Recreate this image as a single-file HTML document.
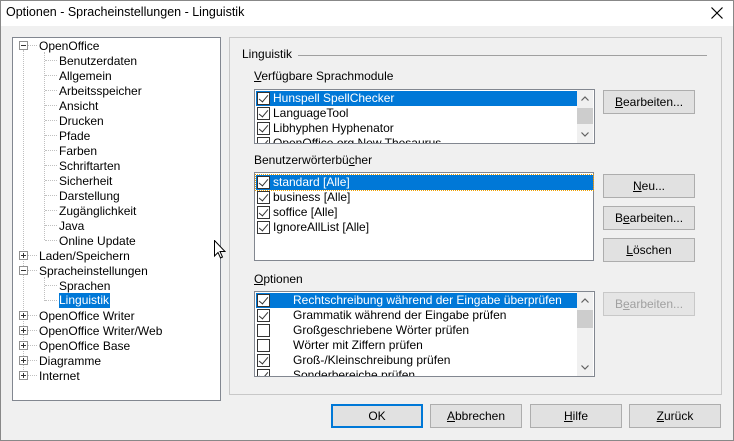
<!DOCTYPE html>
<html><head><meta charset="utf-8"><style>
*{margin:0;padding:0;box-sizing:border-box}
body{width:734px;height:441px;background:#f0f0f0;font-family:"Liberation Sans",sans-serif;font-size:12px;color:#000;position:relative;overflow:hidden}
.a{position:absolute;white-space:nowrap}
.tb{position:absolute;left:0;top:0;width:734px;height:26px;background:#fff}
.frame{position:absolute;left:0;top:0;width:734px;height:441px;border:1px solid #888}
.box{position:absolute;background:#fff;border:1px solid #828790}
.grp{position:absolute;border:1px solid #c8c8c8}
.btn{position:absolute;height:24px;background:#e1e1e1;border:1px solid #adadad;text-align:center;line-height:22px;font-size:12px}
.t{position:absolute;line-height:15px;height:15px;white-space:nowrap}
.sel{background:#0078d7;color:#fff}
.cb{position:absolute;width:13px;height:13px;border:1px solid #333;background:#fff}
.cb.c::after{content:"";position:absolute;left:3px;top:0px;width:4px;height:8px;border:solid #333;border-width:0 1.5px 1.5px 0;transform:rotate(40deg)}
.exp{position:absolute;width:9px;height:9px;border:1px solid #919191;background:#fff}
.exp::before{content:"";position:absolute;left:1px;top:3px;width:5px;height:1px;background:#333}
.exp.p::after{content:"";position:absolute;left:3px;top:1px;width:1px;height:5px;background:#333}
.hl{position:absolute;height:1px;border-top:1px dotted #c0c0c0}
.vl{position:absolute;width:1px;border-left:1px dotted #c0c0c0}
.sb{position:absolute;width:16px;background:#f0f0f0}
.th{position:absolute;left:0;width:16px;background:#cdcdcd}
.tree .t{margin-top:1px}
u{text-decoration:underline}
</style></head><body>
<div class="tb"></div>
<div class="a" style="left:6px;top:5px;font-size:12.5px">Optionen - Spracheinstellungen - Linguistik</div>
<svg class="a" style="left:711px;top:7px" width="12" height="12" viewBox="0 0 12 12"><path d="M0.5 0.5L11.5 11.5M11.5 0.5L0.5 11.5" stroke="#000" stroke-width="1.2"/></svg>
<div class="frame"></div>

<!-- tree -->
<div class="box" style="left:12px;top:37px;width:209px;height:364px;border-color:#828790"></div>
<div class="tree">
<div class="vl" style="left:23px;top:50px;height:326px"></div>
<div class="vl" style="left:44px;top:52px;height:188px"></div>
<div class="vl" style="left:44px;top:277px;height:24px"></div>
<div class="exp" style="left:19px;top:41px"></div>
<div class="hl" style="left:28px;top:45px;width:9px"></div>
<div class="t" style="left:39px;top:38px">OpenOffice</div>
<div class="hl" style="left:45px;top:60px;width:12px"></div><div class="t" style="left:59px;top:53px">Benutzerdaten</div>
<div class="hl" style="left:45px;top:75px;width:12px"></div><div class="t" style="left:59px;top:68px">Allgemein</div>
<div class="hl" style="left:45px;top:90px;width:12px"></div><div class="t" style="left:59px;top:83px">Arbeitsspeicher</div>
<div class="hl" style="left:45px;top:105px;width:12px"></div><div class="t" style="left:59px;top:98px">Ansicht</div>
<div class="hl" style="left:45px;top:120px;width:12px"></div><div class="t" style="left:59px;top:113px">Drucken</div>
<div class="hl" style="left:45px;top:135px;width:12px"></div><div class="t" style="left:59px;top:128px">Pfade</div>
<div class="hl" style="left:45px;top:150px;width:12px"></div><div class="t" style="left:59px;top:143px">Farben</div>
<div class="hl" style="left:45px;top:165px;width:12px"></div><div class="t" style="left:59px;top:158px">Schriftarten</div>
<div class="hl" style="left:45px;top:180px;width:12px"></div><div class="t" style="left:59px;top:173px">Sicherheit</div>
<div class="hl" style="left:45px;top:195px;width:12px"></div><div class="t" style="left:59px;top:188px">Darstellung</div>
<div class="hl" style="left:45px;top:210px;width:12px"></div><div class="t" style="left:59px;top:203px">Zugänglichkeit</div>
<div class="hl" style="left:45px;top:225px;width:12px"></div><div class="t" style="left:59px;top:218px">Java</div>
<div class="hl" style="left:45px;top:240px;width:12px"></div><div class="t" style="left:59px;top:233px">Online Update</div>
<div class="exp p" style="left:19px;top:251px"></div><div class="hl" style="left:28px;top:255px;width:9px"></div><div class="t" style="left:39px;top:248px">Laden/Speichern</div>
<div class="exp" style="left:19px;top:266px"></div><div class="hl" style="left:28px;top:270px;width:9px"></div><div class="t" style="left:39px;top:263px">Spracheinstellungen</div>
<div class="hl" style="left:45px;top:285px;width:12px"></div><div class="t" style="left:59px;top:278px">Sprachen</div>
<div class="hl" style="left:45px;top:300px;width:12px"></div><div class="t sel" style="left:59px;top:292px;padding-right:1px">Linguistik</div>
<div class="exp p" style="left:19px;top:311px"></div><div class="hl" style="left:28px;top:315px;width:9px"></div><div class="t" style="left:39px;top:308px">OpenOffice Writer</div>
<div class="exp p" style="left:19px;top:326px"></div><div class="hl" style="left:28px;top:330px;width:9px"></div><div class="t" style="left:39px;top:323px">OpenOffice Writer/Web</div>
<div class="exp p" style="left:19px;top:341px"></div><div class="hl" style="left:28px;top:345px;width:9px"></div><div class="t" style="left:39px;top:338px">OpenOffice Base</div>
<div class="exp p" style="left:19px;top:356px"></div><div class="hl" style="left:28px;top:360px;width:9px"></div><div class="t" style="left:39px;top:353px">Diagramme</div>
<div class="exp p" style="left:19px;top:371px"></div><div class="hl" style="left:28px;top:375px;width:9px"></div><div class="t" style="left:39px;top:368px">Internet</div>
</div>

<!-- right group -->
<div class="grp" style="left:229px;top:37px;width:493px;height:358px"></div>
<div class="a" style="left:242px;top:47px">Linguistik</div>
<div style="position:absolute;left:298px;top:55px;width:409px;height:1px;background:#a0a0a0"></div>

<div class="a" style="left:254px;top:69px"><u>V</u>erfügbare Sprachmodule</div>
<div class="box" style="left:254px;top:89px;width:341px;height:55px;overflow:hidden">
 <div class="t sel" style="left:1px;top:1px;width:321px"></div>
 <div class="cb c" style="left:2px;top:2px"></div><div class="t" style="left:18px;top:1px;color:#fff">Hunspell SpellChecker</div>
 <div class="cb c" style="left:2px;top:17px"></div><div class="t" style="left:18px;top:16px">LanguageTool</div>
 <div class="cb c" style="left:2px;top:32px"></div><div class="t" style="left:18px;top:31px">Libhyphen Hyphenator</div>
 <div class="cb c" style="left:2px;top:47px"></div><div class="t" style="left:18px;top:46px">OpenOffice.org New Thesaurus</div>
 <div class="sb" style="left:322px;top:0;height:53px"><svg class="a" style="left:4px;top:6px" width="8" height="5"><path d="M0.5 4.5L4 1L7.5 4.5" fill="none" stroke="#606060" stroke-width="1.2"/></svg><div class="th" style="top:18px;height:16px"></div><svg class="a" style="left:4px;top:42px" width="8" height="5"><path d="M0.5 0.5L4 4L7.5 0.5" fill="none" stroke="#606060" stroke-width="1.2"/></svg></div>
</div>
<div class="btn" style="left:603px;top:90px;width:92px"><u>B</u>earbeiten...</div>

<div class="a" style="left:254px;top:153px">Benutzerwörterbü<u>c</u>her</div>
<div class="box" style="left:254px;top:172px;width:340px;height:89px">
 <div class="t sel" style="left:1px;top:2px;width:337px;outline:1px dotted #f0a000"></div>
 <div class="cb c" style="left:2px;top:3px"></div><div class="t" style="left:18px;top:2px;color:#fff">standard [Alle]</div>
 <div class="cb c" style="left:2px;top:18px"></div><div class="t" style="left:18px;top:17px">business [Alle]</div>
 <div class="cb c" style="left:2px;top:33px"></div><div class="t" style="left:18px;top:32px">soffice [Alle]</div>
 <div class="cb c" style="left:2px;top:48px"></div><div class="t" style="left:18px;top:47px">IgnoreAllList [Alle]</div>
</div>
<div class="btn" style="left:603px;top:174px;width:92px"><u>N</u>eu...</div>
<div class="btn" style="left:603px;top:206px;width:92px">B<u>e</u>arbeiten...</div>
<div class="btn" style="left:603px;top:238px;width:92px"><u>L</u>öschen</div>

<div class="a" style="left:254px;top:272px"><u>O</u>ptionen</div>
<div class="box" style="left:254px;top:291px;width:341px;height:86px;overflow:hidden">
 <div class="t sel" style="left:1px;top:1px;width:321px"></div>
 <div class="cb c" style="left:2px;top:2px"></div><div class="t" style="left:38px;top:1px;color:#fff">Rechtschreibung während der Eingabe überprüfen</div>
 <div class="cb c" style="left:2px;top:17px"></div><div class="t" style="left:38px;top:16px">Grammatik während der Eingabe prüfen</div>
 <div class="cb" style="left:2px;top:32px"></div><div class="t" style="left:38px;top:31px">Großgeschriebene Wörter prüfen</div>
 <div class="cb" style="left:2px;top:47px"></div><div class="t" style="left:38px;top:46px">Wörter mit Ziffern prüfen</div>
 <div class="cb c" style="left:2px;top:62px"></div><div class="t" style="left:38px;top:61px">Groß-/Kleinschreibung prüfen</div>
 <div class="cb c" style="left:2px;top:77px"></div><div class="t" style="left:38px;top:76px">Sonderbereiche prüfen</div>
 <div class="sb" style="left:322px;top:0;height:84px"><svg class="a" style="left:4px;top:6px" width="8" height="5"><path d="M0.5 4.5L4 1L7.5 4.5" fill="none" stroke="#606060" stroke-width="1.2"/></svg><div class="th" style="top:18px;height:18px"></div><svg class="a" style="left:4px;top:73px" width="8" height="5"><path d="M0.5 0.5L4 4L7.5 0.5" fill="none" stroke="#606060" stroke-width="1.2"/></svg></div>
</div>
<div class="btn" style="left:603px;top:292px;width:92px;color:#a0a0a0;background:#e5e5e5;border-color:#c8c8c8">B<u>e</u>arbeiten...</div>
<div class="btn" style="left:331px;top:404px;width:92px;border:2px solid #0078d7;line-height:20px">OK</div>
<div class="btn" style="left:430px;top:404px;width:92px"><u>A</u>bbrechen</div>
<div class="btn" style="left:530px;top:404px;width:92px"><u>H</u>ilfe</div>
<div class="btn" style="left:629px;top:404px;width:92px"><u>Z</u>urück</div>
<svg class="a" style="left:214px;top:240px" width="12" height="19" viewBox="0 0 12 19"><path d="M0.5 0.5V16L4 12.5L6.5 18L8.5 17L6 11.5H11Z" fill="#fff" stroke="#000"/></svg>
</body></html>
